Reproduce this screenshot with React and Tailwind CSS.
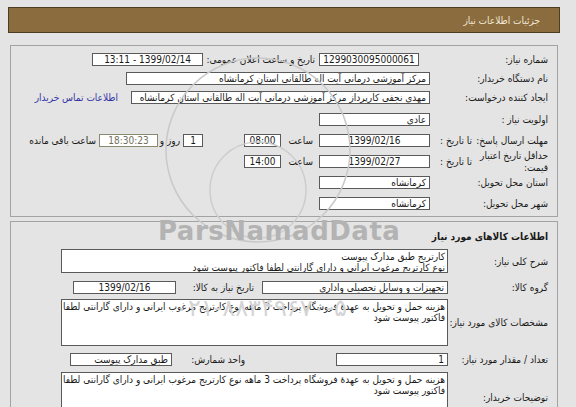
import React from "react";

const box = "h-[13px] bg-white border border-[#5a5a5a] flex items-center px-[3px] leading-none whitespace-nowrap overflow-hidden";

const Field = ({ w, children, center, className = "" }) => (
  <div className={`${box} ${center ? "justify-center" : "justify-start"} ${className}`} style={{ width: w }}>
    {children}
  </div>
);

const Row = ({ top, children, className = "" }) => (
  <div className={`flex items-center h-[13px] whitespace-nowrap ${className}`} style={{ marginTop: top }}>
    {children}
  </div>
);

const Area = ({ h, lines }) => (
  <div className="w-[387px] bg-white border border-[#5a5a5a] px-[2px] pt-[1px] leading-[11px] whitespace-nowrap overflow-hidden" style={{ height: h }}>
    {lines.map((l, i) => (
      <div key={i}>{l}</div>
    ))}
  </div>
);

const longText = [
  "هزینه حمل و تحویل به عهدهٔ فروشگاه پرداخت 3 ماهه نوع کارتریج مرغوب ایرانی و دارای گارانتی لطفا",
  "فاکتور پیوست شود",
];

export default function App() {
  return (
    <div
      dir="rtl"
      className="relative w-[576px] h-[407px] overflow-hidden bg-[#e4e4e4] text-[10px] text-[#1a1a1a]"
      style={{ fontFamily: '"DejaVu Sans Condensed", "DejaVu Sans", sans-serif' }}
    >
      <div className="pt-[7px] pr-[16px] pl-[8px]">
        {/* header */}
        <div className="h-[26px] bg-[#8b6c3e] border border-[#4d3d22] flex items-center pr-[19px] text-[#f1e9d6] text-[10px]">
          جزئیات اطلاعات نیاز
        </div>

        {/* panel 1 */}
        <div className="mt-[12px] mx-[2px] h-[172px] border border-[#a3a3a3] pr-[9px]">
          <Row top={7}>
            <div className="w-[129px]">شماره نیاز:</div>
            <Field w={100} center>1299030095000061</Field>
            <div className="w-[116px] pr-[4px]">تاریخ و ساعت اعلان عمومی:</div>
            <Field w={111} center>1399/02/14 - 13:11</Field>
          </Row>
          <Row top={6}>
            <div className="w-[118px]">نام دستگاه خریدار:</div>
            <Field w={304}>مرکز آموزشی درمانی آیت اله طالقانی استان کرمانشاه</Field>
          </Row>
          <Row top={6}>
            <div className="w-[118px]">ایجاد کننده درخواست:</div>
            <Field w={299}>مهدی نجفی کارپرداز مرکز آموزشی درمانی آیت اله طالقانی استان کرمانشاه</Field>
            <div className="pr-[13px] text-[#3434a6]">اطلاعات تماس خریدار</div>
          </Row>
          <Row top={9}>
            <div className="w-[118px]">اولویت نیاز :</div>
            <Field w={111}>عادی</Field>
          </Row>
          <Row top={8}>
            <div className="w-[76px]">مهلت ارسال پاسخ:</div>
            <div className="w-[42px]">تا تاریخ :</div>
            <Field w={111} center>1399/02/16</Field>
            <div className="w-[38px] pr-[6px]">ساعت</div>
            <Field w={37} center>08:00</Field>
            <div className="w-[41px]" />
            <Field w={20} center>1</Field>
            <div className="w-[25px] pr-[3px]">روز و</div>
            <Field w={59} center className="bg-[#e9e9c3] text-[#707060] border-[#8a8a70]">
              18:30:23
            </Field>
            <div className="pr-[3px]">ساعت باقی مانده</div>
          </Row>
          <Row top={8}>
            <div className="w-[76px] leading-[12px]">
              <div>حداقل تاریخ اعتبار</div>
              <div>قیمت:</div>
            </div>
            <div className="w-[42px]">تا تاریخ :</div>
            <Field w={111} center>1399/02/27</Field>
            <div className="w-[38px] pr-[6px]">ساعت</div>
            <Field w={37} center>14:00</Field>
          </Row>
          <Row top={8}>
            <div className="w-[118px]">استان محل تحویل:</div>
            <Field w={111}>کرمانشاه</Field>
          </Row>
          <Row top={8}>
            <div className="w-[118px]">شهر محل تحویل:</div>
            <Field w={111}>کرمانشاه</Field>
          </Row>
        </div>

        {/* panel 2 */}
        <div className="mt-[4px] mx-[2px] h-[200px] border border-[#a3a3a3] pr-[9px]">
          <div className="mt-[7px] font-bold text-[10px]">اطلاعات کالاهای مورد نیاز</div>
          <div className="flex items-center mt-[5px] whitespace-nowrap">
            <div className="w-[100px]">شرح کلی نیاز:</div>
            <Area h={24} lines={["کارتریج طبق مدارک پیوست", "نوع کارتریج مرغوب ایرانی و دارای گارانتی لطفا فاکتور پیوست شود"]} />
          </div>
          <Row top={8}>
            <div className="w-[100px]">گروه کالا:</div>
            <Field w={186}>تجهیزات و وسایل تحصیلی واداری</Field>
            <div className="w-[86px] pr-[8px]">تاریخ نیاز به کالا:</div>
            <Field w={103} center>1399/02/16</Field>
          </Row>
          <div className="flex items-center mt-[5px] whitespace-nowrap">
            <div className="w-[100px]">مشخصات کالای مورد نیاز:</div>
            <Area h={47} lines={longText} />
          </div>
          <Row top={7}>
            <div className="w-[100px]">تعداد / مقدار مورد نیاز:</div>
            <Field w={112}>1</Field>
            <div className="w-[91px]" />
            <div className="w-[73px]">واحد شمارش:</div>
            <Field w={102}>طبق مدارک پیوست</Field>
          </Row>
          <div className="flex items-center mt-[6px] whitespace-nowrap">
            <div className="w-[100px]">توضیحات خریدار:</div>
            <Area h={50} lines={longText} />
          </div>
        </div>
      </div>

      {/* watermark */}
      <svg className="absolute left-0 top-0 pointer-events-none" width="576" height="407">
        <circle cx="258" cy="150" r="92" fill="none" stroke="#c9c9c9" strokeWidth="1.5" />
        <circle cx="258" cy="190" r="48" fill="none" stroke="#cdcdcd" strokeWidth="1.5" />
      </svg>
      <div
        dir="ltr"
        className="absolute left-[158px] top-[218px] text-[26px] font-bold leading-none text-[#b3b3b3] tracking-[0.5px] pointer-events-none"
        style={{ fontFamily: '"DejaVu Sans", sans-serif' }}
      >
        ParsNamadData
      </div>
      <div
        dir="ltr"
        className="absolute left-[175px] top-[296px] text-[24px] leading-none text-[#d4d4d4] pointer-events-none"
        style={{ fontFamily: '"DejaVu Sans", sans-serif' }}
      >
        ۰۲۱-۸۸۳۴۹۶۷۰-۵
      </div>
    </div>
  );
}
